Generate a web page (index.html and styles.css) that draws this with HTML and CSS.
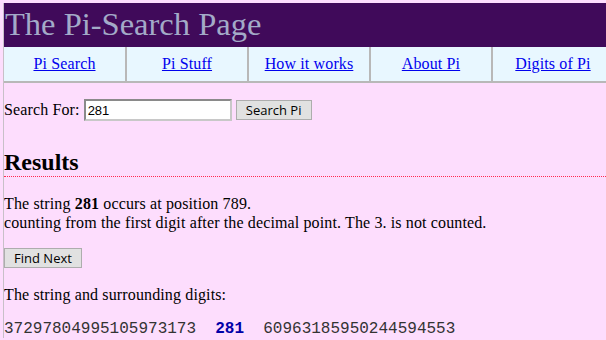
FILE: index.html
```html
<!DOCTYPE html>
<html lang="en">
<head>
  <meta charset="UTF-8">
  <title>The Pi-Search Page</title>
  <link rel="stylesheet" href="styles.css">
</head>
<body>
  <div class="page">
    <h1 class="banner">The Pi-Search Page</h1>

    <div class="nav">
      <a href="#">Pi Search</a>
      <a href="#">Pi Stuff</a>
      <a href="#">How it works</a>
      <a href="#">About Pi</a>
      <a href="#">Digits of Pi</a>
    </div>

    <form class="search">
      <label for="query">Search For:</label>
      <input id="query" type="text" value="281">
      <button type="button" class="btn">Search Pi</button>
    </form>

    <h2 class="results">Results</h2>

    <p class="found">
      The string <b>281</b> occurs at position 789.<br>
      counting from the first digit after the decimal point. The 3. is not counted.
    </p>

    <button type="button" class="btn next">Find Next</button>

    <p class="around">The string and surrounding digits:</p>

    <div class="digits">37297804995105973173  <b>281</b>  60963185950244594553</div>
  </div>
</body>
</html>
```

FILE: styles.css
```css
body {
  margin: 0;
  background: #fdddfd;
  font-family: "Liberation Serif", "Times New Roman", serif;
  font-size: 16px;
  letter-spacing: 0.13px;
  color: #000;
  overflow: hidden;
}
.page {
  margin-top: 3px;
  margin-left: 3px;
  border-left: 1px solid #c8c0c8;
  overflow: hidden;
}
.banner {
  margin: 0;
  height: 44px;
  padding-left: 1px;
  background: #400a5a;
  color: #a3aac8;
  font-weight: normal;
  font-size: 32.5px;
  letter-spacing: 0;
  line-height: 42px;
}
.nav {
  display: flex;
  width: 640px;
  background: #e8f7ff;
  border-bottom: 2px solid #b8b8b8;
}
.nav a {
  flex: 0 0 120px;
  border-right: 2px solid #b8b8b8;
  text-align: center;
  line-height: 34px;
  color: #0000ee;
}
.nav a:first-child {
  flex-basis: 121px;
}
.search {
  display: flex;
  align-items: center;
  margin: 16px 0 0 0;
  height: 22px;
}
.search input {
  width: 140px;
  height: 16px;
  margin: 0 4px 0 4px;
  padding: 1px 2px;
  border: 2px solid;
  border-color: #8a8a8a #c8c8c8 #c8c8c8 #8a8a8a;
  background: #fff;
  font-family: "Liberation Sans", Arial, sans-serif;
  font-size: 13px;
  letter-spacing: 0;
}
.btn {
  height: 20px;
  padding: 0 8px;
  background: #e1e1e1;
  border: 1px solid #adadad;
  font-family: "Open Sans", "Liberation Sans", sans-serif;
  font-size: 13px;
  letter-spacing: 0;
  color: #000;
}
.search .btn {
  width: 76px;
}
.results {
  margin: 28px 0 0 0;
  padding-bottom: 1px;
  border-bottom: 1px dotted #ff2a50;
  font-size: 24px;
  letter-spacing: 0;
  line-height: 26px;
}
.found {
  margin: 17px 0 0 0;
  line-height: 19px;
}
.next {
  display: block;
  width: 78px;
  margin-top: 16px;
}
.around {
  margin: 18px 0 0 0;
}
.digits {
  margin-top: 16px;
  white-space: pre;
  font-family: "Liberation Mono", "Courier New", monospace;
  font-size: 16px;
  letter-spacing: 0;
  color: #333;
}
.digits b {
  color: #0000a8;
}
```
